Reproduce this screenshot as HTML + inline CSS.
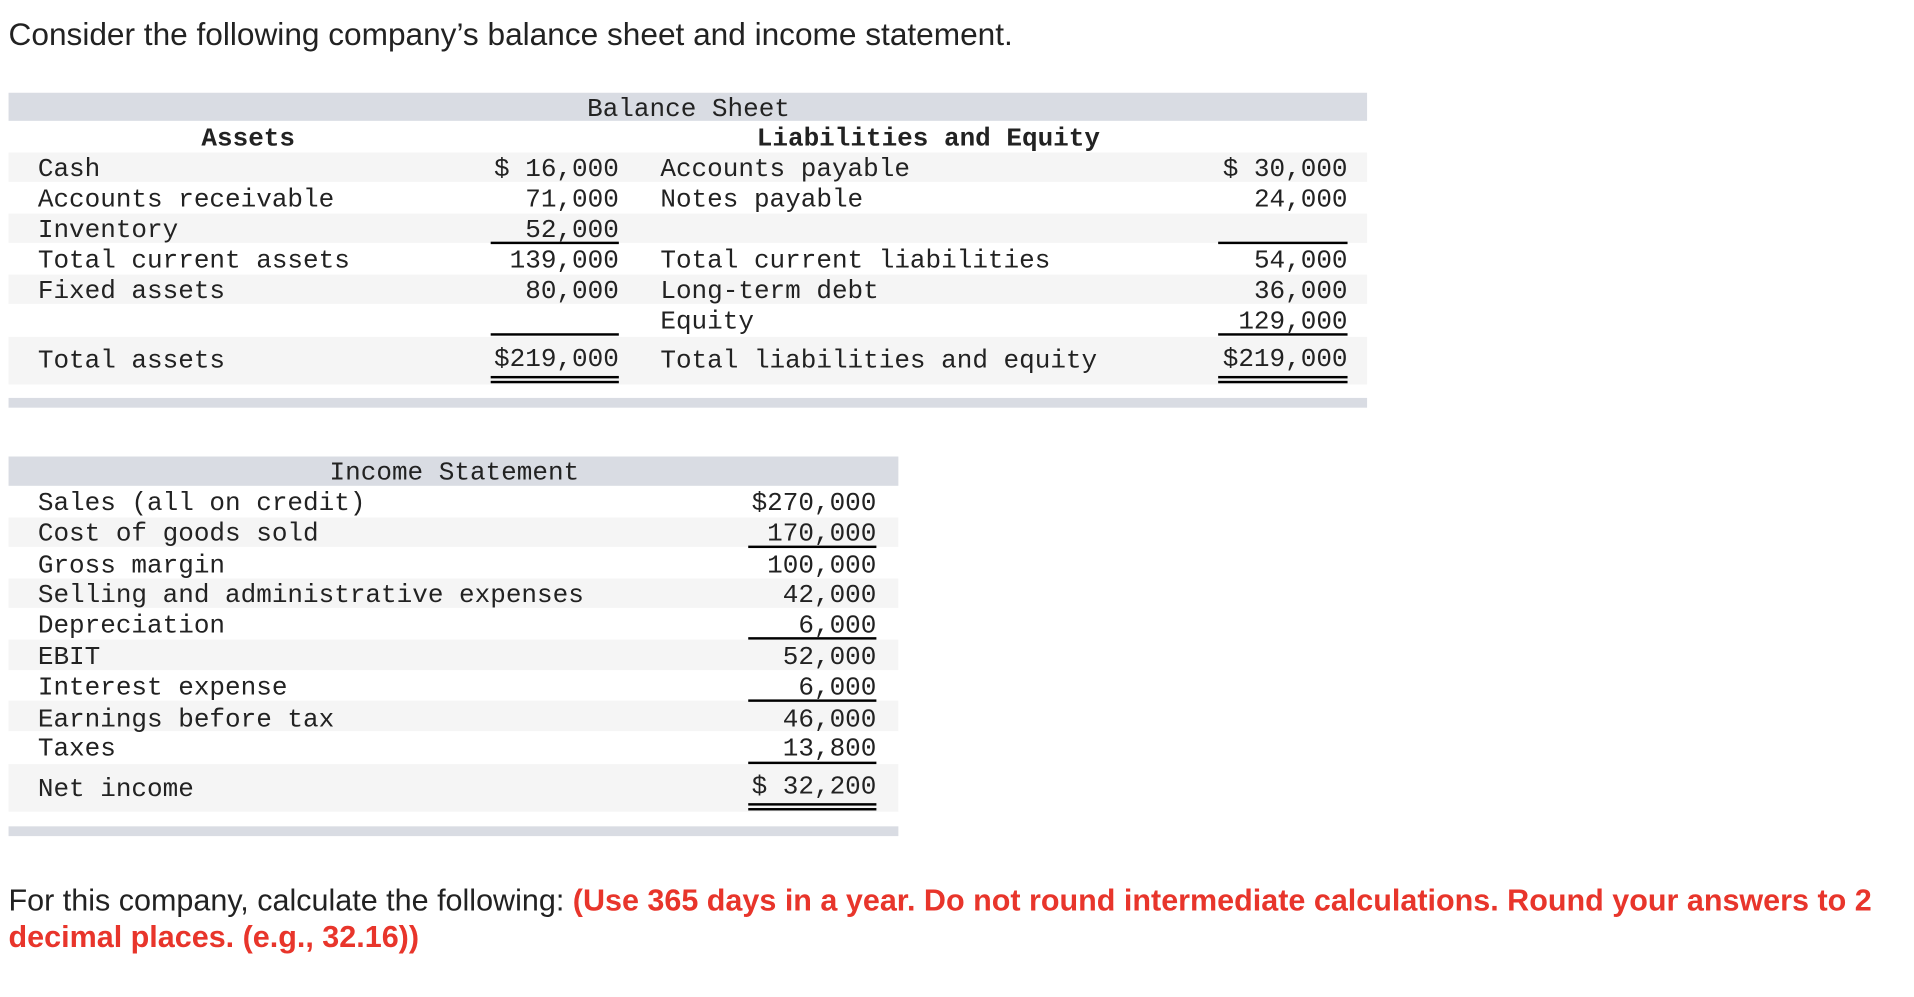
<!DOCTYPE html>
<html><head><meta charset="utf-8"><style>
html,body{margin:0;padding:0;background:#fff;width:1914px;height:996px;overflow:hidden}
#w{position:absolute;left:0;top:0;width:1570px;height:817px;transform:scale(1.2206);transform-origin:0 0}
.a{position:absolute}
.sans{font-family:"Liberation Sans",Arial,sans-serif;font-size:25px;color:#222;white-space:nowrap}
.m{font-family:"Liberation Mono",monospace;font-size:21.3px;color:#222;white-space:nowrap;line-height:25px;margin-top:2px}
.hd{background:#d9dce3}
.g{background:#f5f5f5}
.r{text-align:right}
.ln{background:#000;height:2px}
</style></head><body><div id="w">
<div class="a sans" style="left:7px;top:15px;font-size:25.9px">Consider the following company’s balance sheet and income statement.</div>

<div class="a hd" style="left:7px;top:76px;width:1113px;height:23px"></div>
<div class="a m" style="left:481px;top:76px">Balance Sheet</div>
<div class="a m" style="left:165px;top:100px;font-weight:bold">Assets</div>
<div class="a m" style="left:620px;top:100px;font-weight:bold">Liabilities and Equity</div>
<div class="a g" style="left:7px;top:125px;width:1113px;height:24px"></div>
<div class="a g" style="left:7px;top:175px;width:1113px;height:24px"></div>
<div class="a g" style="left:7px;top:225px;width:1113px;height:24px"></div>
<div class="a g" style="left:7px;top:276px;width:1113px;height:39px"></div>
<div class="a hd" style="left:7px;top:326px;width:1113px;height:8px"></div>

<div class="a m" style="left:31px;top:125px">Cash</div>
<div class="a m" style="left:31px;top:150px">Accounts receivable</div>
<div class="a m" style="left:31px;top:175px">Inventory</div>
<div class="a m" style="left:31px;top:200px">Total current assets</div>
<div class="a m" style="left:31px;top:225px">Fixed assets</div>
<div class="a m" style="left:31px;top:282px">Total assets</div>

<div class="a m r" style="left:380px;width:127px;top:125px">$ 16,000</div>
<div class="a m r" style="left:380px;width:127px;top:150px">71,000</div>
<div class="a m r" style="left:380px;width:127px;top:175px">52,000</div>
<div class="a m r" style="left:380px;width:127px;top:200px">139,000</div>
<div class="a m r" style="left:380px;width:127px;top:225px">80,000</div>
<div class="a m r" style="left:380px;width:127px;top:281px">$219,000</div>
<div class="a ln" style="left:402px;width:105px;top:198px"></div>
<div class="a ln" style="left:402px;width:105px;top:273px"></div>
<div class="a ln" style="left:402px;width:105px;top:308px"></div>
<div class="a ln" style="left:402px;width:105px;top:312px"></div>

<div class="a m" style="left:541px;top:125px">Accounts payable</div>
<div class="a m" style="left:541px;top:150px">Notes payable</div>
<div class="a m" style="left:541px;top:200px">Total current liabilities</div>
<div class="a m" style="left:541px;top:225px">Long-term debt</div>
<div class="a m" style="left:541px;top:250px">Equity</div>
<div class="a m" style="left:541px;top:282px">Total liabilities and equity</div>

<div class="a m r" style="left:970px;width:134px;top:125px">$ 30,000</div>
<div class="a m r" style="left:970px;width:134px;top:150px">24,000</div>
<div class="a m r" style="left:970px;width:134px;top:200px">54,000</div>
<div class="a m r" style="left:970px;width:134px;top:225px">36,000</div>
<div class="a m r" style="left:970px;width:134px;top:250px">129,000</div>
<div class="a m r" style="left:970px;width:134px;top:281px">$219,000</div>
<div class="a ln" style="left:998px;width:106px;top:198px"></div>
<div class="a ln" style="left:998px;width:106px;top:273px"></div>
<div class="a ln" style="left:998px;width:106px;top:308px"></div>
<div class="a ln" style="left:998px;width:106px;top:312px"></div>

<div class="a hd" style="left:7px;top:374px;width:729px;height:24px"></div>
<div class="a m" style="left:270px;top:374px">Income Statement</div>
<div class="a g" style="left:7px;top:424px;width:729px;height:24px"></div>
<div class="a g" style="left:7px;top:474px;width:729px;height:24px"></div>
<div class="a g" style="left:7px;top:524px;width:729px;height:25px"></div>
<div class="a g" style="left:7px;top:574px;width:729px;height:25px"></div>
<div class="a g" style="left:7px;top:626px;width:729px;height:39px"></div>
<div class="a hd" style="left:7px;top:677px;width:729px;height:8px"></div>

<div class="a m" style="left:31px;top:399px">Sales (all on credit)</div>
<div class="a m" style="left:31px;top:424px">Cost of goods sold</div>
<div class="a m" style="left:31px;top:450px">Gross margin</div>
<div class="a m" style="left:31px;top:474px">Selling and administrative expenses</div>
<div class="a m" style="left:31px;top:499px">Depreciation</div>
<div class="a m" style="left:31px;top:525px">EBIT</div>
<div class="a m" style="left:31px;top:550px">Interest expense</div>
<div class="a m" style="left:31px;top:576px">Earnings before tax</div>
<div class="a m" style="left:31px;top:600px">Taxes</div>
<div class="a m" style="left:31px;top:633px">Net income</div>

<div class="a m r" style="left:590px;width:128px;top:399px">$270,000</div>
<div class="a m r" style="left:590px;width:128px;top:424px">170,000</div>
<div class="a m r" style="left:590px;width:128px;top:450px">100,000</div>
<div class="a m r" style="left:590px;width:128px;top:474px">42,000</div>
<div class="a m r" style="left:590px;width:128px;top:499px">6,000</div>
<div class="a m r" style="left:590px;width:128px;top:525px">52,000</div>
<div class="a m r" style="left:590px;width:128px;top:550px">6,000</div>
<div class="a m r" style="left:590px;width:128px;top:576px">46,000</div>
<div class="a m r" style="left:590px;width:128px;top:600px">13,800</div>
<div class="a m r" style="left:590px;width:128px;top:631px">$ 32,200</div>
<div class="a ln" style="left:613px;width:105px;top:447px"></div>
<div class="a ln" style="left:613px;width:105px;top:522px"></div>
<div class="a ln" style="left:613px;width:105px;top:573px"></div>
<div class="a ln" style="left:613px;width:105px;top:624px"></div>
<div class="a ln" style="left:613px;width:105px;top:658px"></div>
<div class="a ln" style="left:613px;width:105px;top:662px"></div>

<div class="a sans" style="left:7px;top:723px;line-height:30px">For this company, calculate the following: <b style="color:#e8352b">(Use 365 days in a year. Do not round intermediate calculations. Round your answers to 2<br>decimal places. (e.g., 32.16))</b></div>
</div></body></html>
